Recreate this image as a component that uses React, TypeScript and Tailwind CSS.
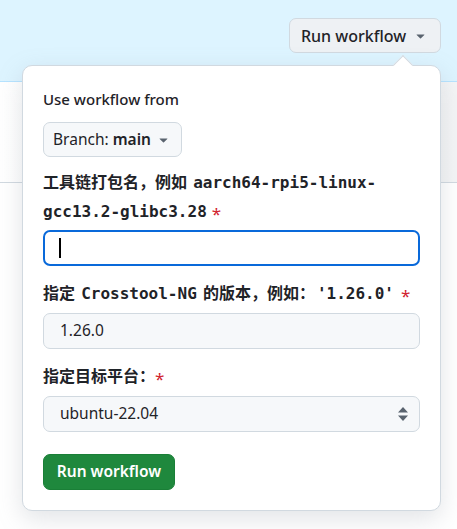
const sans = "font-['Noto_Sans','Noto_Sans_CJK_SC',sans-serif]";

function Caret({ className = "" }: { className?: string }) {
  return (
    <svg viewBox="0 0 16 16" className={className} fill="currentColor" aria-hidden>
      <path d="m4.427 7.427 3.396 3.396a.25.25 0 0 0 .354 0l3.396-3.396A.25.25 0 0 0 11.396 7H4.604a.25.25 0 0 0-.177.427Z" />
    </svg>
  );
}

function Required({ tight = false }: { tight?: boolean }) {
  return (
    <span
      className={`relative top-[3px] text-[17px] font-normal leading-none text-[#d1242f] ${tight ? "ml-0" : "ml-[5px]"}`}
    >
      *
    </span>
  );
}

function Code({ children, className = "mx-[2px]" }: { children: React.ReactNode; className?: string }) {
  return (
    <code className={`font-['DejaVu_Sans_Mono',monospace] text-[16px] font-bold ${className}`}>
      {children}
    </code>
  );
}

export default function App() {
  return (
    <div className={`relative h-[529px] w-[457px] overflow-hidden bg-white text-[#1f2328] ${sans}`}>
      {/* top band with the trigger button */}
      <div className="flex h-[82px] justify-end border-b border-[#b6e3ff] bg-[#ddf4ff] pr-[16px] pt-[18px]">
        <button className="flex h-[35px] w-[152px] items-center justify-center gap-[6px] rounded-[7px] border border-[#d1d9e0] bg-[#eef1f4] text-[16px] font-medium">
          Run workflow
          <Caret className="h-[17px] w-[17px] text-[#59636e]" />
        </button>
      </div>
      <div className="h-[101px] border-b border-[#d1d9e0] bg-gradient-to-r from-white to-[#f4f5f6]" />

      {/* dropdown panel */}
      <div className="absolute left-[22px] top-[65px] w-[419px] rounded-[10px] border border-[#d1d9e0] bg-white px-[20px] pb-[20px] pt-[21px] shadow-[0_8px_24px_rgba(140,149,159,0.25)]">
        <div className="absolute -top-[8px] right-[30px] h-[14px] w-[14px] rotate-45 border-l border-t border-[#d1d9e0] bg-white" />

        <div className="text-[15px] font-medium leading-[24px]">Use workflow from</div>
        <button className="mt-[11px] flex h-[35px] w-[139px] items-center justify-center gap-[4px] rounded-[7px] border border-[#d1d9e0] bg-[#f6f8fa] text-[15.5px]">
          <span>
            Branch: <b className="font-semibold">main</b>
          </span>
          <Caret className="h-[17px] w-[17px] text-[#59636e]" />
        </button>

        <div className="mt-[11px] text-[16px] font-bold leading-[29px]">
          工具链打包名，例如 <Code className="ml-[2px]">aarch64-rpi5-linux-</Code>
          <br />
          <Code className="">gcc13.2-glibc3.28</Code>
          <Required />
        </div>
        <div className="mt-[4px] flex h-[36px] items-center rounded-[7px] border-2 border-[#0969da] px-[14px]">
          <div className="h-[20px] w-[2px] bg-black" />
        </div>

        <div className="mt-[13px] text-[16px] font-bold leading-[29px]">
          指定 <Code>Crosstool-NG</Code> 的版本，例如：<Code>'1.26.0'</Code>
          <Required />
        </div>
        <div className="mt-[5px] flex h-[36px] items-center rounded-[7px] border border-[#d1d9e0] bg-[#f6f8fa] px-[16px] text-[15.5px]">
          1.26.0
        </div>

        <div className="mt-[13px] text-[16px] font-bold leading-[29px]">
          指定目标平台：
          <Required tight />
        </div>
        <div className="mt-[5px] flex h-[36px] items-center justify-between rounded-[7px] border border-[#d1d9e0] bg-[#f6f8fa] pl-[16px] pr-[10px] text-[15.5px]">
          <span>ubuntu-22.04</span>
          <svg viewBox="0 0 12 18" className="h-[18px] w-[12px] text-[#59636e]" fill="currentColor" aria-hidden>
            <path d="M1 7.5 6 2l5 5.5H1ZM1 10.5h10L6 16l-5-5.5Z" />
          </svg>
        </div>

        <button className="mt-[22px] flex h-[36px] w-[132px] items-center justify-center rounded-[7px] border border-[#1a7f37] bg-[#1f883d] text-[15.5px] font-semibold text-white">
          Run workflow
        </button>
      </div>
    </div>
  );
}
